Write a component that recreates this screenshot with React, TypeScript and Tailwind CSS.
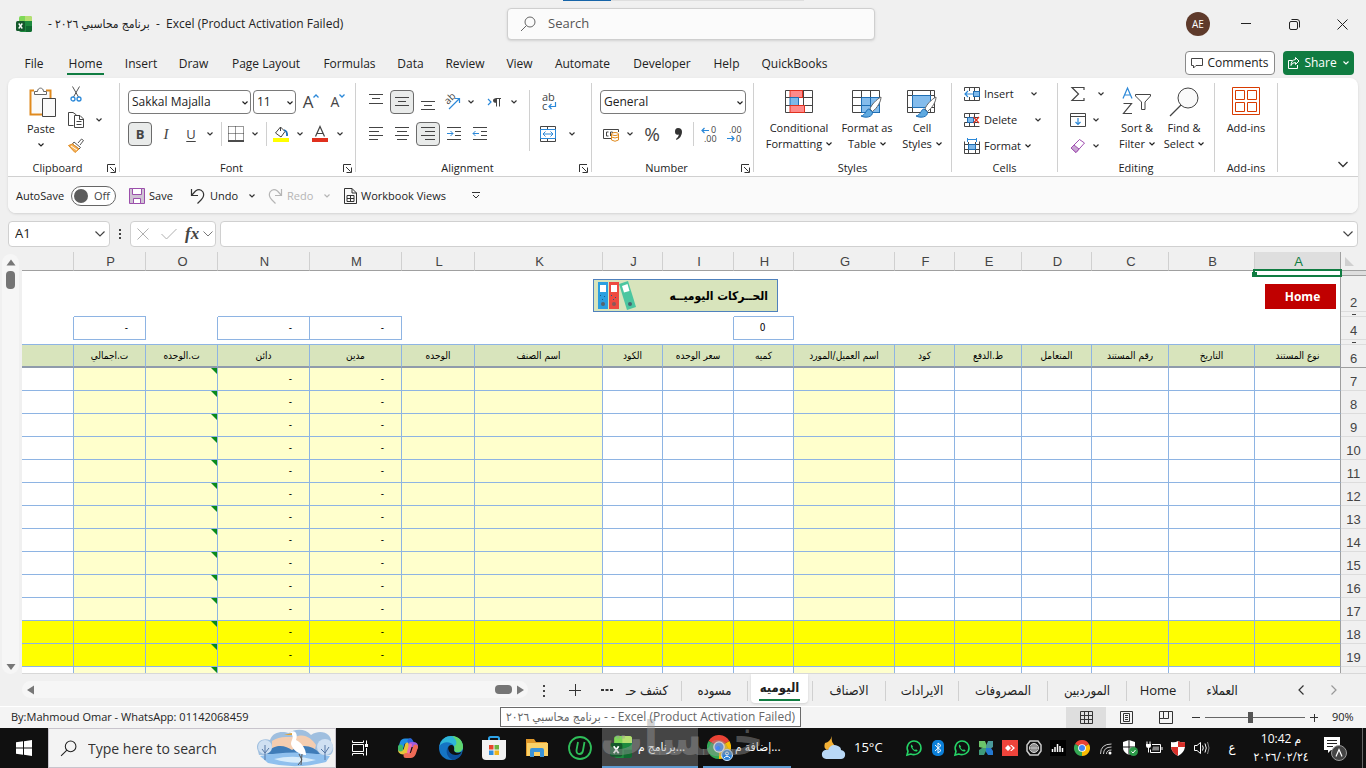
import React from 'react';

type IconProps = {
  w?: number;
  h?: number;
  className?: string;
  children: React.ReactNode;
};

const Icon = ({ w = 16, h = 16, className = '', children }: IconProps) => (
  <svg
    width={w}
    height={h}
    viewBox={`0 0 ${w} ${h}`}
    fill="none"
    stroke="currentColor"
    aria-hidden="true"
    className={`shrink-0 overflow-visible ${className}`}
  >
    {children}
  </svg>
);

const Chevron = ({ className = '' }: { className?: string }) => (
  <Icon w={6} h={4} className={className}>
    <path d="M0.5 0.5L3 3L5.5 0.5" strokeWidth="1.2" />
  </Icon>
);

const Drop = ({ label, className = 'text-[#333]' }: { label: string; className?: string }) => (
  <button aria-label={label} className={`flex h-6 w-4 shrink-0 items-center justify-center ${className}`}>
    <Chevron />
  </button>
);

const Tool = ({
  label,
  width = 'w-[26px]',
  active = false,
  children,
}: {
  label: string;
  width?: string;
  active?: boolean;
  children: React.ReactNode;
}) => (
  <span className={`flex h-6 shrink-0 justify-center ${width}`}>
    <button
      aria-label={label}
      className={`flex h-6 items-center justify-center ${
        active ? 'w-6 rounded border border-[#6b6b6b] bg-[#e9ebea]' : 'w-full'
      }`}
    >
      {children}
    </button>
  </span>
);

const Rule = () => <span className="mx-[3px] h-6 w-px shrink-0 bg-[#d0d0d0]" />;

const Group = ({
  title,
  width,
  launcher = false,
  children,
}: {
  title: string;
  width: string;
  launcher?: boolean;
  children: React.ReactNode;
}) => (
  <section className={`flex shrink-0 ${width}`}>
    <div className="flex min-w-0 flex-1 flex-col">
      <div className="flex h-[82px]">{children}</div>
      <div className="flex h-4 items-center">
        <h2 className="flex-1 text-center">{title}</h2>
        {launcher && (
          <button aria-label={`${title} settings`} className="w-3">
            <Icon w={9} h={9}>
              <path d="M0.5 8V0.5H8M3 3L7.5 7.5M8.5 3.5V8.5H3.5" stroke="#333" />
            </Icon>
          </button>
        )}
      </div>
    </div>
    <span className="mt-[5px] h-[89px] w-px bg-[#d0d0d0]" />
  </section>
);

const Combo = ({ label, value, width }: { label: string; value: string; width: string }) => (
  <label className={`relative block h-6 ${width}`}>
    <select
      aria-label={label}
      className="h-6 w-full appearance-none rounded border border-[#7a7a7a] bg-white pl-[3px] text-[12px]"
    >
      <option>{value}</option>
    </select>
    <Chevron className="pointer-events-none absolute right-[3px] top-[11px]" />
  </label>
);

const BigButton = ({
  lines,
  width,
  drop = true,
  children,
}: {
  lines: string[];
  width: string;
  drop?: boolean;
  children: React.ReactNode;
}) => (
  <button className={`flex shrink-0 flex-col items-center pt-[9px] leading-4 ${width}`}>
    <span className="flex h-[33px] items-start">{children}</span>
    {lines.map((line, i) => (
      <span key={line} className="flex items-center gap-1 whitespace-nowrap">
        {line}
        {drop && i === lines.length - 1 && <Chevron />}
      </span>
    ))}
  </button>
);

/* Ribbon icons */

const alignLines = (rows: [number, number, number][]) => (
  <Icon>
    {rows.map(([y, x1, x2]) => (
      <path key={y} d={`M${x1} ${y}.5H${x2}`} stroke="#444" />
    ))}
  </Icon>
);

const PasteIcon = () => (
  <Icon w={28} h={30} className="ml-1">
    <path d="M5 3.5H1.5V27.5H13M17 3.5H21.5V11" stroke="#e08a1e" strokeWidth="2" />
    <path d="M3 5H20V12H14V26H3Z" fill="#fafafa" stroke="none" />
    <path d="M5.5 7.5V4.5H8.5C8.5 0 14.5 0 14.5 4.5H17.5V7.5Z" fill="#fff" stroke="#666" />
    <path d="M13.5 11.5H26.5V29.5H13.5Z" fill="#fafafa" stroke="#444" />
  </Icon>
);

const CutIcon = () => (
  <Icon w={12} h={16}>
    <path d="M2.5 0.5L8.5 11M9.5 0.5L3.5 11" stroke="#555" />
    <circle cx="3" cy="13" r="2" stroke="#2b88d8" strokeWidth="1.3" />
    <circle cx="9" cy="13" r="2" stroke="#2b88d8" strokeWidth="1.3" />
  </Icon>
);

const CopyIcon = () => (
  <Icon>
    <path d="M5.5 13.5H0.5V0.5H5L8.5 3M6.5 3.5H12L15.5 7V15.5H6.5Z" stroke="#444" />
    <path d="M11.5 3.5V7.5H15.5M8.5 9.5H13.5M8.5 12.5H13.5" stroke="#444" />
  </Icon>
);

const PainterIcon = () => (
  <Icon>
    <path d="M10 5L13.5 1L15.5 2.5L12 7" stroke="#555" fill="#fff" />
    <path d="M6 4L12.5 9.5L11 11L4.5 6Z" fill="#fff" stroke="#555" />
    <path d="M4.5 6L0.5 7.5L7 14.5L11 11Z" fill="#f5b25a" stroke="#e08a1e" />
    <path d="M3 8L9 12" stroke="#fff" />
  </Icon>
);

const grid = 'M0.5 0.5H27.5V22.5H0.5ZM0.5 7.5H27.5M0.5 15.5H27.5M9.5 0.5V22.5M18.5 0.5V22.5';

const Brush = () => (
  <>
    <path d="M29 7C25 9 19 15 18 19L20.5 21.5C25 18 29 12 29 7Z" fill="#fff" stroke="#666" />
    <path d="M17 19C14 19 14 25 9 26C14 28.5 21 27 20.5 22Z" fill="#5ea9e0" stroke="#1f6fb5" />
  </>
);

const ConditionalIcon = () => (
  <Icon w={28} h={30}>
    <g transform="translate(0 3)">
      <path d={grid} stroke="#444" fill="#fff" />
      <path d="M5 0.5H17.5V7.5H5Z" fill="#ff8a8a" stroke="#e0301e" />
      <path d="M5 7.5H13.5V15.5H5Z" fill="#7db8ea" stroke="#1f6fb5" />
      <path d="M5 15.5H19.5V22.5H5Z" fill="#ff8a8a" stroke="#e0301e" />
    </g>
  </Icon>
);

const TableStyleIcon = () => (
  <Icon w={30} h={30}>
    <g transform="translate(0 3)">
      <path d={grid} stroke="#444" fill="#fff" />
      <path d="M9.5 7.5H27.5V22.5H9.5Z" fill="#84bcec" />
      <path d="M9.5 7.5H27.5V22.5H9.5ZM9.5 15.5H27.5M18.5 7.5V22.5" stroke="#1f6fb5" />
      <Brush />
    </g>
  </Icon>
);

const CellStyleIcon = () => (
  <Icon w={30} h={30}>
    <g transform="translate(0 3)">
      <path d="M0.5 0.5H27.5V22.5H0.5ZM0.5 5.5H27.5M0.5 17.5H27.5M5.5 0.5V22.5M23.5 0.5V22.5" stroke="#444" fill="#fff" />
      <path d="M5.5 5.5H23.5V17.5H5.5Z" fill="#84bcec" stroke="#1f6fb5" />
      <Brush />
    </g>
  </Icon>
);

const smallGrid = 'M0.5 1.5H15.5V14.5H0.5ZM0.5 5.5H15.5M0.5 10.5H15.5M5.5 1.5V14.5M10.5 1.5V14.5';

const InsertIcon = () => (
  <Icon>
    <path d={smallGrid} stroke="#444" />
    <path d="M0 5H9V11H0Z" fill="#fff" stroke="none" />
    <path d="M9.5 5.5H15.5V10.5H9.5Z" fill="#7db8ea" stroke="#1f6fb5" />
    <path d="M9 8H1M4 5L1 8L4 11" stroke="#2b88d8" strokeWidth="1.2" />
  </Icon>
);

const DeleteIcon = () => (
  <Icon>
    <path d="M0.5 1.5H15.5M0.5 1.5V5.5H15M0.5 14.5H15.5M0.5 14.5V10.5H15M5.5 1.5V14.5M10.5 1.5V5.5M10.5 10.5V14.5" stroke="#444" />
    <path d="M3.5 5.5H9.5V10.5H3.5Z" fill="#7db8ea" stroke="#1f6fb5" />
    <path d="M9.5 5L15 11M15 5L9.5 11" stroke="#e0301e" strokeWidth="1.2" />
  </Icon>
);

const FormatIcon = () => (
  <Icon>
    <path d="M0.5 3.5V15.5H15.5V3.5M0.5 6.5H15.5M0.5 11.5H15.5M4.5 4V15.5M11.5 4V15.5" stroke="#444" />
    <path d="M4.5 6.5H11.5V11.5H4.5Z" fill="#7db8ea" stroke="#1f6fb5" />
    <path d="M3.5 0V4M12.5 0V4M3.5 1.5H12.5" stroke="#2b88d8" />
  </Icon>
);

const AddinsIcon = () => (
  <Icon w={28} h={28}>
    <path d="M0.5 0.5H27.5V27.5H0.5Z" stroke="#d83b01" />
    <path d="M3.5 3.5H12.5V12.5H3.5ZM15.5 3.5H24.5V12.5H15.5ZM3.5 15.5H12.5V24.5H3.5ZM15.5 15.5H24.5V24.5H15.5Z" stroke="#d83b01" />
  </Icon>
);

const SearchGlyph = ({ size = 16 }: { size?: number }) => (
  <svg width={size} height={size} viewBox="0 0 16 16" fill="none" stroke="currentColor" aria-hidden="true" className="shrink-0">
    <circle cx="10" cy="6" r="5" />
    <path d="M6.5 9.5L1 15" />
  </svg>
);

/* Sheet data, left to right as shown on screen */

const columns = [
  { letter: '', head: '', width: '', fill: false },
  { letter: 'P', head: 'ت.اجمالي', width: 'w-[72px]', fill: true },
  { letter: 'O', head: 'ت.الوحده', width: 'w-[72px]', fill: true },
  { letter: 'N', head: 'دائن', width: 'w-[92px]', fill: true },
  { letter: 'M', head: 'مدين', width: 'w-[92px]', fill: true },
  { letter: 'L', head: 'الوحده', width: 'w-[73px]', fill: true },
  { letter: 'K', head: 'اسم الصنف', width: 'w-[128px]', fill: true },
  { letter: 'J', head: 'الكود', width: 'w-[60px]', fill: false },
  { letter: 'I', head: 'سعر الوحده', width: 'w-[71px]', fill: false },
  { letter: 'H', head: 'كميه', width: 'w-[60px]', fill: false },
  { letter: 'G', head: 'اسم العميل/المورد', width: 'w-[101px]', fill: true },
  { letter: 'F', head: 'كود', width: 'w-[60px]', fill: false },
  { letter: 'E', head: 'ط.الدفع', width: 'w-[67px]', fill: false },
  { letter: 'D', head: 'المتعامل', width: 'w-[70px]', fill: false },
  { letter: 'C', head: 'رقم المستند', width: 'w-[77px]', fill: false },
  { letter: 'B', head: 'التاريخ', width: 'w-[86px]', fill: false },
  { letter: 'A', head: 'نوع المستند', width: 'w-[86px]', fill: false },
];

const bodyRows = [7, 8, 9, 10, 11, 12, 13, 14, 15, 16, 17, 18, 19, 20];

const totals: Record<string, string> = { P: '-', N: '-', M: '-', H: '0' };

const RowHead = ({ children }: { children?: React.ReactNode }) => (
  <th
    scope="row"
    className="border-b border-[#dcdcdc] p-0 align-bottom font-['Liberation_Sans'] text-[13px] font-normal leading-4 text-[#444]"
  >
    {children}
  </th>
);

const Tick = () => <span className="mx-auto block h-px w-1 bg-[#444]" />;

const Sheet = () => (
  <div className="relative min-w-0 flex-1 overflow-hidden border-b border-[#d8d8d8]">
    <table className="w-full table-fixed border-separate border-spacing-0">
      <colgroup>
        {columns.map((c) => (
          <col key={c.letter} className={c.width} />
        ))}
        <col className="w-[25px]" />
      </colgroup>
      <thead>
        <tr className="h-[19px] font-['Liberation_Sans'] text-[13px] leading-4 text-[#444]">
          {columns.map((c) => (
            <th
              key={c.letter}
              scope="col"
              className={`border-b border-r border-b-[#a0a0a0] p-0 pl-0.5 align-bottom font-normal ${
                c.letter === 'A' ? 'border-r-[#a0a0a0] bg-[#dedede] text-[#107c41]' : 'border-r-[#d0d0d0]'
              }`}
            >
              {c.letter}
            </th>
          ))}
          <th className="border-b border-[#a0a0a0] p-0" aria-label="Select all">
            <Icon w={9} h={9} className="ml-1">
              <path d="M0 0V9H9Z" fill="#d0d0d0" stroke="none" />
            </Icon>
          </th>
        </tr>
      </thead>
      <tbody className="font-['DejaVu_Sans_Condensed','DejaVu_Sans',sans-serif] text-[10px] text-black">
        <tr className="h-[5px]">
          <td colSpan={17} className="border-r border-[#9e9e9e] bg-white p-0" />
          <th className="border-b border-[#a0a0a0] bg-[#dedede] p-0" />
        </tr>
        <tr className="h-9">
          <td colSpan={17} className="border-r border-[#9e9e9e] bg-white p-0" />
          <RowHead>2</RowHead>
        </tr>
        <tr className="h-[5px]">
          {columns.map((c) => (
            <td
              key={c.letter}
              className={`bg-white p-0 ${c.letter in totals ? 'border-b border-[#8eb4e3]' : ''} ${
                c.letter === 'A' ? 'border-r border-[#9e9e9e]' : ''
              }`}
            />
          ))}
          <th className="border-b border-[#dcdcdc] p-0">
            <Tick />
          </th>
        </tr>
        <tr className="h-[23px]">
          {columns.map((c, i) => {
            const next = columns[i + 1]?.letter;
            return (
              <td
                key={c.letter}
                className={`bg-white p-0 leading-4 ${
                  c.letter in totals ? 'border-b border-[#8eb4e3]' : ''
                } ${c.letter in totals || next in totals ? 'border-r border-[#8eb4e3]' : ''} ${
                  c.letter === 'A' ? 'border-r border-[#9e9e9e]' : ''
                } ${c.letter === 'H' ? 'pr-0.5 text-center' : 'pr-[17px] text-right'}`}
              >
                {totals[c.letter]}
              </td>
            );
          })}
          <RowHead>4</RowHead>
        </tr>
        <tr className="h-[5px]">
          <td colSpan={17} className="border-b border-r border-b-[#8eb4e3] border-r-[#9e9e9e] bg-white p-0" />
          <th className="border-b border-[#dcdcdc] p-0">
            <Tick />
          </th>
        </tr>
        <tr className="h-[23px]">
          {columns.map((c) => (
            <th
              key={c.letter}
              scope="col"
              className={`whitespace-nowrap border-b-2 border-r border-b-[#8f9bab] bg-[#d8e4bc] p-0 text-center font-normal leading-4 ${
                c.letter === 'A' ? 'border-r-[#9e9e9e]' : 'border-r-[#8eb4e3]'
              }`}
            >
              {c.head}
            </th>
          ))}
          <th
            scope="row"
            className="border-b border-[#9e9e9e] p-0 align-bottom font-['Liberation_Sans'] text-[13px] font-normal leading-4 text-[#444]"
          >
            6
          </th>
        </tr>
        {bodyRows.map((n) => (
          <tr key={n} className="h-[23px]">
            {columns.map((c) => (
              <td
                key={c.letter}
                className={`relative border-b border-r border-b-[#8eb4e3] p-0 pr-[17px] text-right leading-4 ${
                  c.letter === 'A' ? 'border-r-[#9e9e9e]' : 'border-r-[#8eb4e3]'
                } ${n === 18 || n === 19 ? 'bg-[#ffff00]' : c.fill ? 'bg-[#ffffcc]' : 'bg-white'}`}
              >
                {(c.letter === 'N' || c.letter === 'M') && '-'}
                {c.letter === 'O' && (
                  <Icon w={6} h={6} className="absolute right-0 top-0">
                    <path d="M0 0H6V6Z" fill="#0a8a1a" stroke="none" />
                  </Icon>
                )}
              </td>
            ))}
            <RowHead>{n}</RowHead>
          </tr>
        ))}
      </tbody>
    </table>

    {/* Active cell outline over A1 */}
    <div className="absolute right-6 top-[17px] h-2 w-[89px] border-2 border-[#107c41]">
      <span className="absolute -left-[3px] top-[1px] h-[5px] w-[5px] bg-[#107c41]" />
    </div>

    {/* Shapes floating on the sheet */}
    <div className="absolute right-[588px] top-[27px] flex h-[33px] w-[185px] items-center justify-between border border-[#4f81bd] bg-[#d8e4bc] pl-1 pr-[9px]">
      <Icon w={39} h={29}>
        <g stroke="none">
          <path d="M0 1H10V28H0Z" fill="#2a9fe0" />
          <path d="M11 1H21V28H11Z" fill="#ee4b40" />
          <path d="M21 3L30 0L38 26L29 29Z" fill="#4cc6a0" />
          <path d="M2 4H8V11H2ZM13 4H19V11H13ZM24 5L29.5 3L31.5 10L26 11.5Z" fill="#fff" />
          <path d="M2 14H3V15H2ZM6 15H7V16H6ZM4 18H5V19H4ZM13 14H14V15H13ZM17 16H18V17H17ZM15 18H16V19H15Z" fill="#1b5e8f" />
          <circle cx="5" cy="23" r="2" fill="#56646e" />
          <circle cx="16" cy="23" r="2" fill="#8a5a58" />
          <circle cx="32" cy="23" r="2" fill="#4a6670" />
        </g>
      </Icon>
      <span className="font-['DejaVu_Sans_Condensed','DejaVu_Sans',sans-serif] text-[12px] font-bold text-black">
        الحــركات اليوميــه
      </span>
    </div>
    <button className="absolute right-[30px] top-8 h-[25px] w-[71px] bg-[#c00000] pl-1 text-[12px] font-bold text-white">
      Home
    </button>
  </div>
);

/* Taskbar icons */

const Whatsapp = () => (
  <Icon>
    <path d="M1 15L2 11.3C-0.5 6.5 3 1 8 1C12 1 15 4 15 8C15 13 9.5 16 4.7 14Z" stroke="#25d366" strokeWidth="1.6" />
    <path d="M5.5 4.5C4 6 5.5 8.5 7.3 10.2C9 11.7 11.3 12 11.7 10.4L10 9.3L9 10C7.8 9.5 7 8.5 6.5 7.5L7 6.5Z" fill="#25d366" stroke="none" />
  </Icon>
);

const Chrome = ({ size }: { size: number }) => (
  <svg width={size} height={size} viewBox="0 0 24 24" aria-hidden="true" className="shrink-0">
    <path d="M12 12L1.6 6A12 12 0 0 1 22.4 6Z" fill="#ea4335" />
    <path d="M12 12L22.4 6A12 12 0 0 1 12 24Z" fill="#fbbc04" />
    <path d="M12 12L12 24A12 12 0 0 1 1.6 6Z" fill="#34a853" />
    <circle cx="12" cy="12" r="5.8" fill="#fff" />
    <circle cx="12" cy="12" r="4.5" fill="#4285f4" />
  </svg>
);

const ExcelIcon = ({ size }: { size: number }) => (
  <svg width={size} height={size} viewBox="0 0 16 16" aria-hidden="true" className="shrink-0">
    <path d="M3 2Q3 0 5 0H14Q16 0 16 2V6H3Z" fill="#7fd858" />
    <path d="M9 0H14Q16 0 16 2V5H9Z" fill="#b5df72" />
    <path d="M3 5H16V14Q16 16 14 16H5Q3 16 3 14Z" fill="#1d8a3e" />
    <path d="M10 10H16V14Q16 16 14 16H10Z" fill="#0f6a30" />
    <rect x="0" y="5" width="9" height="10" rx="1.5" fill="#14592c" />
    <path d="M2.7 7.5L6.3 12.5M6.3 7.5L2.7 12.5" stroke="#fff" strokeWidth="1.3" />
  </svg>
);

const HeronArt = () => (
  <Icon w={78} h={38}>
    <g stroke="none">
      <path d="M2 22C-2 13 7 8 14 11C17 2 27 2 33 4C40 -1 50 0 55 6C66 -1 76 6 75 13C79 18 77 25 74 26H3Z" fill="#9fbfdf" />
      <path d="M16 12C24 6 36 9 42 7C50 5 56 10 60 16L58 23H16Z" fill="#f4cdb0" />
      <path d="M12 23C20 14 30 17 36 21C46 14 58 17 64 25H10Z" fill="#3f7cb8" />
      <path d="M4 27Q38 20 74 27L70 33Q40 41 12 34Z" fill="#8fc0ee" />
      <path d="M18 30Q38 25 60 31Q40 37 18 30Z" fill="#d6ebfb" />
      <circle cx="9" cy="18" r="7" fill="#cfe0f2" />
      <circle cx="69" cy="18" r="8" fill="#cfe0f2" />
      <path d="M34 3C40 0 42 6 40 11C46 14 50 20 50 26C43 26 36 20 35 15C35 11 38 9 36 6Z" fill="#fff" />
      <path d="M28 6L36 4L36 6Z" fill="#e0a030" />
    </g>
    <path d="M9 16V31M6 20L9 24L13 19M69 16V31M65 20L69 24L73 18" stroke="#5577a5" />
    <path d="M43 25L46 31L42 36M46 25L45 36" stroke="#555" />
  </Icon>
);

const TaskCell = ({ label, children }: { label: string; children: React.ReactNode }) => (
  <button aria-label={label} className="flex h-10 w-[43px] items-center justify-center">
    {children}
  </button>
);

const TrayCell = ({ label, children }: { label: string; children: React.ReactNode }) => (
  <button aria-label={label} className="flex h-10 w-6 items-center justify-center">
    {children}
  </button>
);

const menu = [
  { name: 'File', width: 'w-6' },
  { name: 'Home', width: 'w-[37px]' },
  { name: 'Insert', width: 'w-[32px]' },
  { name: 'Draw', width: 'w-[31px]' },
  { name: 'Page Layout', width: 'w-[72px]' },
  { name: 'Formulas', width: 'w-[53px]' },
  { name: 'Data', width: 'w-[27px]' },
  { name: 'Review', width: 'w-[40px]' },
  { name: 'View', width: 'w-[27px]' },
  { name: 'Automate', width: 'w-[57px]' },
  { name: 'Developer', width: 'w-[60px]' },
  { name: 'Help', width: 'w-[27px]' },
  { name: 'QuickBooks', width: 'w-[67px]' },
];

const sheetTabs = [
  { name: 'الاصناف', width: 'w-[73px]' },
  { name: 'الايرادات', width: 'w-[73px]' },
  { name: 'المصروفات', width: 'w-[89px]' },
  { name: 'الموردبين', width: 'w-[79px]' },
  { name: 'Home', width: 'w-[63px]' },
  { name: 'العملاء', width: 'w-[64px]' },
];

const TitleBar = () => (
  <header className="relative flex h-12 items-center">
    <div className="absolute left-[563px] top-0 flex h-px w-[241px] bg-[#dedede]">
      <span className="h-px w-12 bg-[#1664a8]" />
    </div>
    <div className="flex w-[507px] items-center gap-4 pl-4">
      <ExcelIcon size={16} />
      <h1 className="whitespace-pre text-[12px]">- برنامج محاسبي ٢٠٢٦  -  Excel (Product Activation Failed)</h1>
    </div>
    <label className="flex h-8 w-[368px] items-center gap-3 rounded border border-[#cfcfcf] bg-[#fbfbfb] px-3 text-[#666] shadow-sm">
      <SearchGlyph />
      <input aria-label="Search" placeholder="Search" className="w-full bg-transparent text-[13px] outline-none placeholder:text-[#555]" />
    </label>
    <div className="ml-auto flex items-center">
      <button className="mr-3 h-6 w-6 rounded-full bg-[#5e3a2b] text-[10px] text-white">AE</button>
      <button aria-label="Minimize" className="flex h-8 w-12 items-center justify-center">
        <Icon w={10} h={10}><path d="M0 4.5H10" stroke="#222" /></Icon>
      </button>
      <button aria-label="Restore" className="flex h-8 w-12 items-center justify-center">
        <Icon w={11} h={11}>
          <path d="M0.5 4Q0.5 2.5 2 2.5H7Q8.5 2.5 8.5 4V9Q8.5 10.5 7 10.5H2Q0.5 10.5 0.5 9ZM2.5 0.5H8Q10.5 0.5 10.5 3V8.5" stroke="#222" />
        </Icon>
      </button>
      <button aria-label="Close" className="flex h-8 w-12 items-center justify-center">
        <Icon w={11} h={11}><path d="M0.5 0.5L10.5 10.5M10.5 0.5L0.5 10.5" stroke="#222" /></Icon>
      </button>
    </div>
  </header>
);

const MenuBar = () => (
  <nav className="flex h-[30px] items-center pl-[22px] pr-3 text-[12px]">
    <div className="flex flex-1 gap-[21px]">
      {menu.map((m) => (
        <button
          key={m.name}
          className={`flex h-6 shrink-0 justify-center whitespace-nowrap border-b-2 leading-[25px] ${m.width} ${
            m.name === 'Home' ? 'border-[#107c41]' : 'border-transparent'
          }`}
        >
          {m.name}
        </button>
      ))}
    </div>
    <button className="mr-2 flex h-6 w-[90px] items-center justify-center gap-1 rounded border border-[#8a8a8a] bg-white">
      <Icon w={12} h={12}>
        <path d="M0.5 1.5H11.5V8.5H5L2.5 11V8.5H0.5Z" stroke="#444" />
      </Icon>
      Comments
    </button>
    <button className="flex h-6 w-[71px] items-center justify-center gap-1 rounded bg-[#107c41] text-white">
      <Icon w={12} h={12}>
        <path d="M4.5 3.5H0.5V11.5H9.5V8M7.5 0.5L11 4L7.5 7.5V5.5Q4 5.5 3 8.5Q3 3 7.5 2.5Z" />
      </Icon>
      Share
      <Chevron className="ml-0.5" />
    </button>
  </nav>
);

const Ribbon = () => (
  <div className="mx-2 rounded-lg bg-white text-[11px] leading-4 shadow-sm">
    <div className="flex h-[99px] border-b border-[#d0d0d0]">
      <Group title="Clipboard" width="w-[112px]" launcher>
        <button className="flex w-[56px] flex-col items-center pl-2.5 pt-[9px]">
          <PasteIcon />
          <span className="mt-1 leading-4">Paste</span>
          <Chevron className="mt-1.5" />
        </button>
        <div className="flex flex-col pt-[3px]">
          <div className="flex h-[26px] items-center">
            <Tool label="Cut" width="w-6"><CutIcon /></Tool>
          </div>
          <div className="flex h-[26px] items-center">
            <Tool label="Copy" width="w-6"><CopyIcon /></Tool>
            <span className="ml-[3px]"><Drop label="Copy options" /></span>
          </div>
          <div className="flex h-[26px] items-center">
            <Tool label="Format Painter" width="w-6"><PainterIcon /></Tool>
          </div>
        </div>
      </Group>

      <Group title="Font" width="w-[236px]" launcher>
        <div className="flex flex-col gap-2 pl-2 pt-3">
          <div className="flex">
            <Combo label="Font name" value="Sakkal Majalla" width="w-[123px] mr-0.5" />
            <Combo label="Font size" value="11" width="w-[43px]" />
            <Tool label="Increase font size" width="w-[30px]">
              <span className="text-[17px] leading-6 text-[#444]">A</span>
              <Icon w={6} h={4} className="mb-3"><path d="M0.5 3.5L3 1L5.5 3.5" stroke="#2b88d8" strokeWidth="1.3" /></Icon>
            </Tool>
            <Tool label="Decrease font size" width="w-6">
              <span className="text-[14px] leading-6 text-[#444]">A</span>
              <Icon w={6} h={4} className="mb-3"><path d="M0.5 0.5L3 3L5.5 0.5" stroke="#2b88d8" strokeWidth="1.3" /></Icon>
            </Tool>
          </div>
          <div className="flex items-center">
            <Tool label="Bold" width="w-6" active><b className="text-[13px] text-[#444]">B</b></Tool>
            <Tool label="Italic" width="w-7"><i className="font-['Liberation_Serif'] text-[15px] text-[#444]">I</i></Tool>
            <Tool label="Underline" width="w-[22px]"><u className="text-[13px] text-[#444] underline-offset-2">U</u></Tool>
            <Drop label="Underline options" />
            <Rule />
            <Tool label="Borders" width="w-[22px]">
              <Icon>
                <path d="M0.5 0.5H15.5V14M0.5 0.5V14M7.5 0.5V14M0.5 7.5H15.5" stroke="#333" strokeDasharray="1 1" />
                <path d="M0 15H16" stroke="#111" strokeWidth="1.5" />
              </Icon>
            </Tool>
            <Drop label="Border options" />
            <Rule />
            <Tool label="Fill color" width="w-[22px]">
              <Icon>
                <path d="M7.5 1L2.5 7L8 11L12 5.5L7.5 1V5" stroke="#444" />
                <path d="M11 4Q14.5 5 14 10" stroke="#1f6fb5" strokeWidth="1.8" />
                <path d="M0 12H16V16H0Z" fill="#ffff00" stroke="none" />
              </Icon>
            </Tool>
            <Drop label="Fill options" />
            <Tool label="Font color" width="w-6">
              <Icon>
                <path d="M3.5 10.5L8 0.5L12.5 10.5M5 7.5H11" stroke="#444" strokeWidth="1.2" />
                <path d="M0 12H16V16H0Z" fill="#e0301e" stroke="none" />
              </Icon>
            </Tool>
            <Drop label="Font color options" />
          </div>
        </div>
      </Group>

      <Group title="Alignment" width="w-[236px]" launcher>
        <div className="flex flex-col gap-2 pl-[7px] pt-3">
          <div className="flex">
            <Tool label="Top align">{alignLines([[0, 1, 15], [4, 4, 12], [9, 1, 15]])}</Tool>
            <Tool label="Middle align" active>{alignLines([[3, 1, 15], [7, 4, 12], [11, 1, 15]])}</Tool>
            <Tool label="Bottom align">{alignLines([[7, 1, 15], [11, 4, 12], [15, 1, 15]])}</Tool>
            <Tool label="Orientation" width="w-[22px]">
              <Icon>
                <path d="M5 15L15 5M11 4.5H15.5V9" stroke="#2b88d8" strokeWidth="1.2" />
                <text x="0" y="0" transform="translate(4 11) rotate(-45)" fontSize="10" fill="#444" stroke="none">ab</text>
              </Icon>
            </Tool>
            <Drop label="Orientation options" />
            <Tool label="Text direction" width="w-[22px] ml-[5px]">
              <Icon>
                <path d="M1 5L4 8L1 11" stroke="#2b88d8" strokeWidth="1.2" />
                <path d="M9.5 4V12.5M12.5 4V12.5M14 4.5H9" stroke="#444" />
                <path d="M10 4Q6 4 6 6.5Q6 9 10 9Z" fill="#444" stroke="none" />
              </Icon>
            </Tool>
            <Drop label="Direction options" />
          </div>
          <div className="flex">
            <Tool label="Align left">{alignLines([[1, 1, 15], [5, 1, 11], [9, 1, 15], [13, 1, 10]])}</Tool>
            <Tool label="Center">{alignLines([[1, 1, 15], [5, 3, 13], [9, 1, 15], [13, 3, 13]])}</Tool>
            <Tool label="Align right" active>{alignLines([[1, 1, 15], [5, 5, 15], [9, 1, 15], [13, 5, 15]])}</Tool>
            <Tool label="Decrease indent">
              <Icon>
                <path d="M1 1.5H15M9 5.5H15M9 9.5H15M1 13.5H15" stroke="#444" />
                <path d="M1 7.5H7M4.5 5L7 7.5L4.5 10" stroke="#2b88d8" />
              </Icon>
            </Tool>
            <Tool label="Increase indent">
              <Icon>
                <path d="M1 1.5H15M9 5.5H15M9 9.5H15M1 13.5H15" stroke="#444" />
                <path d="M7 7.5H1M3.5 5L1 7.5L3.5 10" stroke="#2b88d8" />
              </Icon>
            </Tool>
          </div>
        </div>
        <span className="ml-[7px] mt-3 h-[61px] w-px bg-[#d0d0d0]" />
        <div className="flex flex-col gap-2 pl-1 pt-3">
          <Tool label="Wrap text" width="w-[30px]">
            <Icon w={14}>
              <text x="0" y="7" fontSize="11" fill="#444" stroke="none">ab</text>
              <text x="0" y="16" fontSize="11" fill="#444" stroke="none">c</text>
              <path d="M13.5 8V12.5H7M9.5 10L7 12.5L9.5 15" stroke="#2b88d8" strokeWidth="1.2" />
            </Icon>
          </Tool>
          <div className="flex">
            <Tool label="Merge and center" width="w-[28px]">
              <Icon>
                <path d="M0.5 0.5H15.5V15.5H0.5ZM7.5 0.5V3M7.5 12.5V15.5" stroke="#444" />
                <path d="M0.5 3.5H15.5V12.5H0.5Z" stroke="#2b88d8" fill="#fff" />
                <path d="M3 8H13M5.5 5.5L3 8L5.5 10.5M10.5 5.5L13 8L10.5 10.5" stroke="#2b88d8" />
              </Icon>
            </Tool>
            <span className="ml-0.5"><Drop label="Merge options" /></span>
          </div>
        </div>
      </Group>

      <Group title="Number" width="w-[162px]" launcher>
        <div className="flex flex-col gap-2 pl-2 pt-3">
          <Combo label="Number format" value="General" width="w-[146px]" />
          <div className="flex">
            <Tool label="Accounting format" width="w-[22px]">
              <Icon>
                <path d="M8 12.5H0.5V3.5H15.5V6" stroke="#444" />
                <path d="M5.5 6H3.5V10H5.5M7.5 10V6H9.5V8" stroke="#444" />
                <ellipse cx="12" cy="8" rx="3.5" ry="1.5" fill="#fff" stroke="#e08a1e" />
                <path d="M8.5 8V14Q12 16.5 15.5 14V8M8.5 11Q12 13 15.5 11" stroke="#e08a1e" />
              </Icon>
            </Tool>
            <Drop label="Accounting options" />
            <Tool label="Percent" width="w-7"><span className="text-[19px] leading-6 text-[#444]">%</span></Tool>
            <Tool label="Comma" width="w-6">
              <Icon w={9} h={14}>
                <path d="M4 1Q8 1 8 5Q8 10 2.5 13L2 12Q4.5 10 5 7.5Q1 8.5 1 4.5Q1 1 4 1Z" fill="#333" stroke="none" />
              </Icon>
            </Tool>
            <Rule />
            <Tool label="Increase decimal" width="w-6">
              <Icon>
                <path d="M8 4.5H1M3.5 2L1 4.5L3.5 7" stroke="#2b88d8" strokeWidth="1.2" />
                <text x="10" y="7" fontSize="9" fill="#444" stroke="none">0</text>
                <text x="3" y="16" fontSize="9" fill="#444" stroke="none">.00</text>
              </Icon>
            </Tool>
            <Tool label="Decrease decimal">
              <Icon>
                <path d="M1 12.5H8M5.5 10L8 12.5L5.5 15" stroke="#2b88d8" strokeWidth="1.2" />
                <text x="3" y="7" fontSize="9" fill="#444" stroke="none">.00</text>
                <text x="10" y="16" fontSize="9" fill="#444" stroke="none">0</text>
              </Icon>
            </Tool>
          </div>
        </div>
      </Group>

      <Group title="Styles" width="w-[198px]">
        <div className="flex pl-2">
          <BigButton lines={['Conditional', 'Formatting']} width="w-[74px]"><ConditionalIcon /></BigButton>
          <BigButton lines={['Format as', 'Table']} width="w-[62px]"><TableStyleIcon /></BigButton>
          <BigButton lines={['Cell', 'Styles']} width="w-12"><CellStyleIcon /></BigButton>
        </div>
      </Group>

      <Group title="Cells" width="w-[106px]">
        <div className="flex flex-col pl-3 pt-[3px]">
          <div className="flex h-[26px] items-center">
            <button className="flex w-[62px] items-center gap-1"><InsertIcon />Insert</button>
            <Drop label="Insert options" />
          </div>
          <div className="flex h-[26px] items-center">
            <button className="flex w-[66px] items-center gap-1"><DeleteIcon />Delete</button>
            <Drop label="Delete options" />
          </div>
          <button className="flex h-[26px] items-center gap-1"><FormatIcon />Format<Chevron /></button>
        </div>
      </Group>

      <Group title="Editing" width="w-[157px]">
        <div className="flex w-[58px] flex-col pl-2.5 pt-[3px]">
          <div className="flex h-[26px] items-center">
            <Tool label="AutoSum" width="w-5"><Icon><path d="M14 4V1.5H2L8.5 8L2 14.5H14V12" stroke="#444" strokeWidth="1.2" /></Icon></Tool>
            <span className="ml-[5px]"><Drop label="AutoSum options" /></span>
          </div>
          <div className="flex h-[26px] items-center">
            <Tool label="Fill" width="w-5">
              <Icon>
                <path d="M0.5 1.5H15.5V14.5H0.5ZM0.5 4.5H15.5" stroke="#444" />
                <path d="M8 6V12.5M5.5 10L8 12.5L10.5 10" stroke="#2b88d8" strokeWidth="1.2" />
              </Icon>
            </Tool>
            <Drop label="Fill options" />
          </div>
          <div className="flex h-[26px] items-center">
            <Tool label="Clear" width="w-5">
              <Icon>
                <path d="M1 10L9.5 1.5L14.5 5L6 14.5Z" fill="#fff" stroke="#a04fb0" />
                <path d="M1 10L4 7L9 11L6 14.5Z" fill="#c9a6d3" stroke="#a04fb0" />
              </Icon>
            </Tool>
            <Drop label="Clear options" />
          </div>
        </div>
        <BigButton lines={['Sort &', 'Filter']} width="w-[42px]">
          <Icon w={30} h={30}>
            <path d="M1 11.5L5.5 1L10 11.5M2.5 8H8.5" stroke="#2b88d8" strokeWidth="1.2" />
            <path d="M1.5 16.5H9.5L1.5 26.5H10" stroke="#444" strokeWidth="1.2" />
            <path d="M13.5 7.5H28.5V9L23 15V22.5H19.5V15L13.5 9Z" stroke="#444" />
          </Icon>
        </BigButton>
        <BigButton lines={['Find &', 'Select']} width="w-[52px]">
          <Icon w={30} h={30}>
            <circle cx="19" cy="11" r="10" stroke="#444" fill="#fafafa" />
            <path d="M12 18L1 29" stroke="#444" strokeWidth="1.2" />
          </Icon>
        </BigButton>
      </Group>

      <Group title="Add-ins" width="w-[63px]">
        <BigButton lines={['Add-ins']} width="w-[62px]" drop={false}><AddinsIcon /></BigButton>
      </Group>

      <button aria-label="Collapse ribbon" className="ml-auto mr-2.5 mt-[78px] h-4">
        <Icon w={10} h={7}><path d="M0.5 1L5 5.5L9.5 1" stroke="#333" strokeWidth="1.3" /></Icon>
      </button>
    </div>

    <div className="flex h-9 items-center rounded-b-lg bg-[#fafafa] pl-2 pt-px">
      <label className="flex items-center gap-2">
        <span className="w-[47px]">AutoSave</span>
        <span className="relative flex h-5 w-[45px] items-center">
          <input type="checkbox" className="h-5 w-[45px] appearance-none rounded-full border border-[#666] bg-white" />
          <span className="pointer-events-none absolute left-[3px] h-3.5 w-3.5 rounded-full bg-[#5c5c5c]" />
          <span className="pointer-events-none absolute right-1.5 text-[#444]">Off</span>
        </span>
      </label>
      <button className="ml-[13px] flex w-[45px] items-center gap-1">
        <Icon>
          <path d="M0.5 0.5H15.5V15.5H0.5Z" fill="#cfc3d3" stroke="#9b4fab" />
          <path d="M3.5 0.5H12.5V6.5H3.5ZM4.5 10.5H11.5V15.5H4.5Z" fill="#fff" stroke="#9b4fab" />
        </Icon>
        Save
      </button>
      <button className="ml-4 flex w-[49px] items-center gap-1">
        <Icon><path d="M1.5 1V7.5H8M1.5 7.5L5.5 3Q10 0 13 4Q15 8 11 12L7.5 15.5" stroke="#333" strokeWidth="1.2" /></Icon>
        Undo
      </button>
      <span className="ml-[5px]"><Drop label="Undo history" /></span>
      <button disabled className="ml-[7px] flex w-[49px] items-center gap-1 text-[#b5b5b5]">
        <Icon><path d="M14.5 1V7.5H8M14.5 7.5L10.5 3Q6 0 3 4Q1 8 5 12L8.5 15.5" strokeWidth="1.2" /></Icon>
        Redo
      </button>
      <span className="ml-[3px]"><Drop label="Redo history" className="text-[#b5b5b5]" /></span>
      <button className="ml-[9px] flex items-center gap-1">
        <Icon w={13}>
          <path d="M0.5 0.5H8L12.5 5V15.5H0.5ZM8 0.5V5H12.5" stroke="#333" />
          <path d="M3 7.5H10V13.5H3ZM6.5 7.5V13.5M3 10.5H10" stroke="#333" />
        </Icon>
        Workbook Views
      </button>
      <button aria-label="Customize toolbar" className="ml-[26px]">
        <Icon w={8} h={7}><path d="M0 0.5H8M1 3L4 6L7 3" stroke="#333" /></Icon>
      </button>
    </div>
  </div>
);

const FormulaBar = () => (
  <div className="mb-[5px] mt-2 flex h-[26px] items-center pl-2 pr-2">
    <label className="flex h-[26px] w-[102px] items-center rounded border border-[#d0d0d0] bg-white pl-1.5 pr-1">
      <input aria-label="Name box" defaultValue="A1" className="w-full min-w-0 bg-transparent text-[13px] outline-none" />
      <Icon w={10} h={6}><path d="M0.5 0.5L5 5L9.5 0.5" stroke="#444" strokeWidth="1.2" /></Icon>
    </label>
    <Icon w={20} h={12}>
      <path d="M9 1H11V3H9ZM9 5H11V7H9ZM9 9H11V11H9Z" fill="#444" stroke="none" />
    </Icon>
    <div className="mr-1 flex h-[26px] w-[86px] items-center rounded border border-[#d0d0d0] bg-white pl-1.5">
      <button aria-label="Cancel"><Icon w={12} h={12}><path d="M0.5 0.5L11.5 11.5M11.5 0.5L0.5 11.5" stroke="#b0b0b0" /></Icon></button>
      <button aria-label="Enter" className="ml-3"><Icon w={16} h={12}><path d="M0.5 6L5.5 11L15.5 1" stroke="#b0b0b0" /></Icon></button>
      <button className="ml-2 font-['Liberation_Serif'] text-[17px] font-bold italic leading-4 text-[#444]">fx</button>
      <Icon w={10} h={6} className="ml-1"><path d="M0.5 0.5L5 5L9.5 0.5" stroke="#777" /></Icon>
    </div>
    <label className="flex h-[26px] flex-1 items-center rounded border border-[#d0d0d0] bg-white pr-1">
      <input aria-label="Formula" className="flex-1 bg-transparent px-2 text-[13px] outline-none" />
      <Icon w={10} h={6}><path d="M0.5 0.5L5 5L9.5 0.5" stroke="#444" strokeWidth="1.2" /></Icon>
    </label>
  </div>
);

const VerticalScroll = () => (
  <div className="flex w-[22px] shrink-0 pl-0.5 pt-0.5">
    <div className="flex w-[17px] flex-col items-center rounded-full bg-[#f6f6f6] pb-1 pt-[5px]">
      <Icon w={10} h={7}><path d="M5 0.5L9.5 6.5H0.5Z" fill="#777" stroke="none" /></Icon>
      <span className="mt-[5px] h-[18px] w-[9px] rounded bg-[#757575]" />
      <Icon w={10} h={7} className="mt-auto"><path d="M5 7L9.5 1H0.5Z" fill="#777" stroke="none" /></Icon>
    </div>
  </div>
);

const SheetTabs = () => (
  <div className="flex h-8 shrink-0 items-start pl-[22px] text-[13px]">
    <div className="mt-[7px] flex h-[17px] min-w-0 flex-1 items-center rounded-full bg-[#f6f6f6] pl-[5px] pr-1">
      <Icon w={7} h={10}><path d="M0 5L7 0.5V9.5Z" fill="#777" stroke="none" /></Icon>
      <span className="ml-auto mr-[5px] h-[9px] w-[17px] rounded bg-[#757575]" />
      <Icon w={7} h={10}><path d="M7 5L0 0.5V9.5Z" fill="#777" stroke="none" /></Icon>
    </div>
    <div className="flex h-8 items-center pl-[13px]">
      <Icon w={6} h={12}><path d="M2 1H4V3H2ZM2 6H4V8H2ZM2 11H4V13H2Z" fill="#444" stroke="none" /></Icon>
      <button aria-label="New sheet" className="ml-[22px]">
        <Icon w={12} h={12}><path d="M6.5 0V12M0 6.5H12" stroke="#333" /></Icon>
      </button>
      <button aria-label="More sheets" className="ml-[20px]">
        <Icon w={12} h={4}><path d="M0 1H3V3H0ZM4.5 1H7.5V3H4.5ZM9 1H12V3H9Z" fill="#333" stroke="none" /></Icon>
      </button>
    </div>
    <button className="mt-[7px] h-5 w-[69px] whitespace-nowrap border-r border-[#d0d0d0]">كشف حـ</button>
    <button className="mt-[7px] h-5 w-[66px] border-r border-[#d0d0d0]">مسوده</button>
    <button className="ml-[3px] h-[29px] w-[57px] rounded-b bg-white px-2 text-[13px] font-bold shadow">
      <span className="flex h-[25px] items-center justify-center border-b-2 border-[#107c41]">اليوميه</span>
    </button>
    <span className="mt-[7px] ml-1 h-5 w-px bg-[#d0d0d0]" />
    {sheetTabs.map((t) => (
      <button
        key={t.name}
        className={`mt-[7px] h-5 shrink-0 whitespace-nowrap border-r border-[#d0d0d0] last-of-type:border-r-0 ${t.width}`}
      >
        {t.name}
      </button>
    ))}
    <div className="flex h-8 w-[112px] shrink-0 items-center pl-[44px]">
      <button aria-label="Previous sheets"><Icon w={6} h={10}><path d="M5.5 0.5L1 5L5.5 9.5" stroke="#333" strokeWidth="1.2" /></Icon></button>
      <button aria-label="Next sheets" className="ml-[27px]"><Icon w={6} h={10}><path d="M0.5 0.5L5 5L0.5 9.5" stroke="#999" strokeWidth="1.2" /></Icon></button>
    </div>
  </div>
);

const StatusBar = () => (
  <div className="relative flex h-[22px] shrink-0 items-center border-t border-white bg-[#f4f4f4] pl-[11px] text-[11px]">
    <span className="flex-1">By:Mahmoud Omar - WhatsApp: 01142068459</span>
    <div className="absolute bottom-[1px] left-[500px] flex h-5 w-[301px] items-center justify-center whitespace-nowrap border border-[#6b6b6b] bg-white text-[12px] text-[#666]">
      برنامج محاسبي ٢٠٢٦ - - Excel (Product Activation Failed)
    </div>
    <button aria-label="Normal view" className="flex h-full w-10 items-center justify-center bg-[#dedede]">
      <Icon w={13} h={13}><path d="M0.5 0.5H12.5V12.5H0.5ZM4.5 0.5V12.5M8.5 0.5V12.5M0.5 4.5H12.5M0.5 8.5H12.5" stroke="#333" /></Icon>
    </button>
    <button aria-label="Page layout view" className="flex h-full w-10 items-center justify-center">
      <Icon w={13} h={13}><path d="M0.5 0.5H12.5V12.5H0.5ZM3.5 2.5H9.5V10.5H3.5ZM5 4.5H8M5 6.5H8M5 8.5H8" stroke="#333" /></Icon>
    </button>
    <button aria-label="Page break view" className="flex h-full w-10 items-center justify-center">
      <Icon w={14} h={13}><path d="M0.5 0.5H13.5V12.5H0.5ZM4.5 0.5V7.5H9.5V0.5M0.5 7.5H4.5" stroke="#333" /></Icon>
    </button>
    <button aria-label="Zoom out" className="ml-[6px]"><Icon w={8} h={8}><path d="M0 3.5H8" stroke="#333" /></Icon></button>
    <input
      type="range"
      aria-label="Zoom"
      min="0"
      max="100"
      defaultValue="45"
      className="ml-[5px] h-4 w-[100px] appearance-none bg-transparent
                [&::-webkit-slider-runnable-track]:h-px [&::-webkit-slider-runnable-track]:bg-[#666]
                [&::-webkit-slider-thumb]:-mt-[5px] [&::-webkit-slider-thumb]:h-[11px] [&::-webkit-slider-thumb]:w-[5px]
                [&::-webkit-slider-thumb]:appearance-none [&::-webkit-slider-thumb]:bg-[#555]"
    />
    <button aria-label="Zoom in" className="ml-[5px]"><Icon w={8} h={8}><path d="M0 3.5H8M4.5 0V8" stroke="#333" /></Icon></button>
    <span className="ml-[14px] w-[34px]">90%</span>
  </div>
);

const Taskbar = () => (
  <footer className="relative flex h-10 shrink-0 items-center bg-[#101010] text-white">
    <button aria-label="Start" className="flex h-10 w-12 items-center justify-center">
      <Icon>
        <path d="M0 2.3L7 1.3V7.5H0ZM8 1.2L16 0V7.5H8ZM0 8.5H7V14.7L0 13.7ZM8 8.5H16V16L8 14.8Z" fill="#fff" stroke="none" />
      </Icon>
    </button>
    <label className="flex h-10 w-72 items-center border border-[#c8c4cc] bg-[#f3f3f3] pl-[11px] text-[#222]">
      <SearchGlyph size={17} />
      <input
        aria-label="Taskbar search"
        placeholder="Type here to search"
        className="ml-[11px] w-[168px] bg-transparent text-[14px] outline-none placeholder:text-[#333]"
      />
      <HeronArt />
    </label>
    <button aria-label="Task view" className="mr-0.5 flex h-10 w-12 items-center justify-center">
      <Icon>
        <path d="M0.5 0.5V2.5H11.5V0.5M0.5 4.5H11.5V11.5H0.5ZM0.5 15.5V13.5H11.5V15.5M14.5 0.5V4M14.5 8V15.5" stroke="#fff" />
        <path d="M13 4H16V7H13Z" fill="#fff" stroke="none" />
      </Icon>
    </button>
    <TaskCell label="Copilot">
      <Icon w={22} h={22}>
        <g strokeWidth="5" strokeLinecap="round" strokeLinejoin="round">
          <path d="M13 4H8Q6 4 5.3 6L3.5 12" stroke="#1f8fe6" />
          <path d="M3.5 12Q3 15 6 15H8.5L10.5 8" stroke="#e8c33a" />
          <path d="M3.5 10L3.5 12" stroke="#3dbb6a" />
          <path d="M13 4L15 7" stroke="#2d62d8" />
          <path d="M18.5 10Q19 7.5 16 7.5H14" stroke="#a05be0" />
          <path d="M18.5 10L16.5 16Q15.5 18.5 13.5 18.5H9" stroke="#ee6a55" />
          <path d="M13.5 8L11.5 15" stroke="#f06fae" strokeWidth="3" />
        </g>
      </Icon>
    </TaskCell>
    <TaskCell label="Edge">
      <Icon w={24} h={24}>
        <g stroke="none">
          <circle cx="12" cy="12" r="12" fill="#1574c4" />
          <path d="M0.5 10C2 3 7 0 12 0C19 0 24 5 24 11C24 15 20 17 16.5 16C14 15 16.5 13 15 10C12 5 4 5 0.5 10Z" fill="#2fb6d8" />
          <path d="M13 0C20 0 24 5 24 11C24 15 20 17 16.5 16C14 15 16.5 13 15 10C19 9 18 3 13 0Z" fill="#5fd66e" />
          <path d="M9 13C9 9 12 8.5 14 9.5C16 11 14.5 14 15.5 15.5C17 17.5 21 17 23 15.5C20 21 14 20 11.5 18C9.8 16.5 9 15 9 13Z" fill="#101010" />
          <path d="M9 11C6 15 8 22 14 24C19 23.5 22 20 23 17C17 21 9 19 9 11Z" fill="#0c4f9b" />
        </g>
      </Icon>
    </TaskCell>
    <TaskCell label="Store">
      <Icon w={24} h={24}>
        <path d="M7 6V2.5Q7 1 8.5 1H15.5Q17 1 17 2.5V6" stroke="#2ea3e8" strokeWidth="2" />
        <path d="M0 4H24V20Q24 24 20 24H4Q0 24 0 20Z" fill="#f2f2f2" stroke="none" />
        <path d="M7 9H11.5V13.5H7Z" fill="#e8452c" stroke="none" />
        <path d="M12.5 9H17V13.5H12.5Z" fill="#6cb33f" stroke="none" />
        <path d="M7 14.5H11.5V19H7Z" fill="#2f8fe0" stroke="none" />
        <path d="M12.5 14.5H17V19H12.5Z" fill="#f0b41c" stroke="none" />
      </Icon>
    </TaskCell>
    <TaskCell label="File Explorer">
      <Icon w={22} h={20}>
        <g stroke="none">
          <path d="M0 1H8L10 4H21V18H0Z" fill="#e0982a" />
          <path d="M1 5H22V18H1Z" fill="#fbd168" />
          <path d="M4 19V12Q4 10 6 10H16Q18 10 18 12V19H14V14H8V19Z" fill="#3a93d8" />
        </g>
      </Icon>
    </TaskCell>
    <TaskCell label="Uninstaller">
      <Icon w={24} h={24}>
        <circle cx="12" cy="12" r="11" stroke="#2fbf5a" strokeWidth="1.8" />
        <path d="M10 6L8.5 14Q8.2 18 11.5 18Q14.5 18 15 14.5L16.5 6" stroke="#2fbf5a" strokeWidth="1.8" />
      </Icon>
    </TaskCell>
    <button className="ml-px flex h-10 w-24 items-center gap-1.5 border-b-2 border-[#5e9bd1] bg-[#454545] pl-2 text-[12px]">
      <ExcelIcon size={22} />
      <span className="whitespace-nowrap">برنامج م...</span>
    </button>
    <button className="ml-[5px] flex h-10 w-[88px] items-center gap-1 border-b-2 border-[#5e9bd1] pl-1 text-[12px]">
      <span className="relative">
        <Chrome size={24} />
        <Icon w={12} h={12} className="absolute -bottom-0.5 -right-0.5">
          <circle cx="6" cy="6" r="5.5" fill="#2b7fd4" stroke="#d6eaff" />
          <circle cx="6" cy="4.5" r="1.5" stroke="#fff" />
          <path d="M3 9Q6 5.5 9 9" stroke="#fff" />
        </Icon>
      </span>
      <span className="whitespace-nowrap">إضافة م...</span>
    </button>
    <button className="ml-auto flex h-10 w-[73px] items-center gap-2 text-[13px]">
      <Icon w={25} h={24}>
        <path d="M11 0Q9 7 16 11L6 14Q2 12 4 7Q9 6 11 0Z" fill="#f2b035" stroke="none" />
        <path d="M5 23Q0 22 1 17Q3 13 7 14Q10 7 17 10Q20 11 20 14Q25 15 24 20Q23 23 20 23Z" fill="#b9d8f6" stroke="none" />
      </Icon>
      15°C
    </button>
    <div className="ml-2 flex">
      <TrayCell label="WhatsApp"><Whatsapp /></TrayCell>
      <TrayCell label="Bluetooth">
        <Icon w={12} h={16}>
          <rect width="12" height="16" rx="5" fill="#0b7fd8" stroke="none" />
          <path d="M3 5L9 10.5L6 13V3L9 5.5L3 11" stroke="#fff" />
        </Icon>
      </TrayCell>
      <TrayCell label="WhatsApp Business"><Whatsapp /></TrayCell>
      <TrayCell label="Sync">
        <Icon w={14} h={14}>
          <g stroke="none">
            <path d="M0 0H6L8 5L7 8L4 7L0 6Z" fill="#6cc46a" />
            <path d="M14 0H9L7 5V8H11L14 6Z" fill="#4a9a9a" />
            <path d="M0 14H5L7 10V7H3L0 9Z" fill="#3f9a7a" />
            <path d="M7 7H12L14 10V14H9L7 11Z" fill="#2479d0" />
          </g>
        </Icon>
      </TrayCell>
      <TrayCell label="AnyDesk">
        <Icon>
          <path d="M0 0H16V16H0Z" fill="#ef443b" stroke="none" />
          <path d="M3 8L6 5L9 8L6 11ZM8 5L11 8L8 11L9.5 11L13 8L9.5 5Z" fill="#fff" stroke="none" />
        </Icon>
      </TrayCell>
      <TrayCell label="Network">
        <Icon>
          <path d="M1 11V5L4 1H12L15 5V11L12 15H4Z" stroke="#ccc" strokeWidth="1.5" />
          <circle cx="8" cy="8" r="4.5" stroke="#ddd" fill="#555" />
          <path d="M3.5 8H12.5M8 3.5V12.5M6 4V12M10 4V12" stroke="#ccc" />
        </Icon>
      </TrayCell>
      <TrayCell label="Audio meter">
        <Icon>
          <path d="M0 0H16V16H0Z" fill="#000" stroke="none" />
          <path d="M2.5 9V12M5 7V12M7.5 4V12M10 6V12M12.5 8V12" stroke="#fff" strokeWidth="1.5" />
        </Icon>
      </TrayCell>
      <TrayCell label="Chrome"><Chrome size={16} /></TrayCell>
      <TrayCell label="Wi-Fi">
        <Icon w={14} h={14}>
          <path d="M1.5 13Q1.5 3 12.5 3M4.5 13Q4.5 6 12.5 6M7.5 13Q7.5 9 12.5 9" stroke="#ccc" />
          <circle cx="11" cy="12" r="1.5" fill="#fff" stroke="none" />
        </Icon>
      </TrayCell>
      <TrayCell label="Security">
        <Icon>
          <path d="M7 0L13 2V8Q13 12 7 15Q1 12 1 8V2Z" fill="#fff" stroke="none" />
          <path d="M7 0V15M1 7H13" stroke="#101010" />
          <circle cx="11.5" cy="11.5" r="4.5" fill="#2c9a48" stroke="none" />
          <path d="M9.5 11.5L11 13L13.5 10" stroke="#fff" />
        </Icon>
      </TrayCell>
      <TrayCell label="Battery">
        <Icon>
          <path d="M6 4.5H14.5V12.5H4.5V9.5M16 7V10M1 1.5V4M4 1.5V4M2.5 8V12.5" stroke="#fff" />
          <path d="M7 6.5H13V10.5H6Z" fill="#888" stroke="none" />
          <path d="M0 4H5V6Q5 8 2.5 8Q0 8 0 6Z" fill="#fff" stroke="none" />
        </Icon>
      </TrayCell>
      <TrayCell label="Antivirus">
        <Icon>
          <path d="M8 1Q11 3 15 2V7Q14 13 8 16Q2 13 1 7V2Q5 3 8 1Z" fill="#fff" stroke="none" />
          <path d="M8 1Q11 3 15 2V7H8ZM1 7H8V16Q2 13 1 7Z" fill="#d8302a" stroke="none" />
        </Icon>
      </TrayCell>
      <TrayCell label="Volume">
        <Icon>
          <path d="M0.5 5.5H3L6.5 2.5V13.5L3 10.5H0.5ZM8.5 5.5Q10 8 8.5 10.5M11 3.5Q13.5 8 11 12.5" stroke="#fff" />
          <path d="M13.5 2Q16.5 8 13.5 14" stroke="#888" />
        </Icon>
      </TrayCell>
    </div>
    <button className="w-9 text-[13px]">ع</button>
    <div className="flex w-[62px] flex-col items-center whitespace-nowrap text-[12px] leading-[18px]">
      <span>10:42 م</span>
      <span>٢٠٢٦/٠٢/٢٤</span>
    </div>
    <button aria-label="Notifications" className="ml-3 mr-3 h-6 w-[26px]">
      <Icon w={26} h={26}>
        <path d="M0 1H16V14H7L4 17V14H0Z" fill="#fff" stroke="none" />
        <path d="M3 4.5H13M3 7.5H13M3 10.5H9" stroke="#222" />
        <circle cx="15" cy="17" r="7.5" fill="#444" stroke="#999" />
        <path d="M12 20.5L15 13.5L18 20.5" stroke="#fff" strokeWidth="1.2" />
      </Icon>
    </button>
    <span className="mr-[3px] h-10 w-px bg-[#666]" />
    <span
      aria-hidden="true"
      className="pointer-events-none absolute -top-4 left-[600px] text-[48px] font-bold leading-[50px] text-[#9a9a9a]/45"
    >
      خمسات
    </span>
  </footer>
);

export default function App() {
  return (
    <div className="flex h-screen flex-col overflow-hidden bg-[#f0f0f0] font-['Open_Sans','DejaVu_Sans_Condensed','DejaVu_Sans',sans-serif] text-[#222]">
      <TitleBar />
      <MenuBar />
      <Ribbon />
      <FormulaBar />
      <main className="flex min-h-0 flex-1">
        <VerticalScroll />
        <Sheet />
      </main>
      <SheetTabs />
      <StatusBar />
      <Taskbar />
    </div>
  );
}
